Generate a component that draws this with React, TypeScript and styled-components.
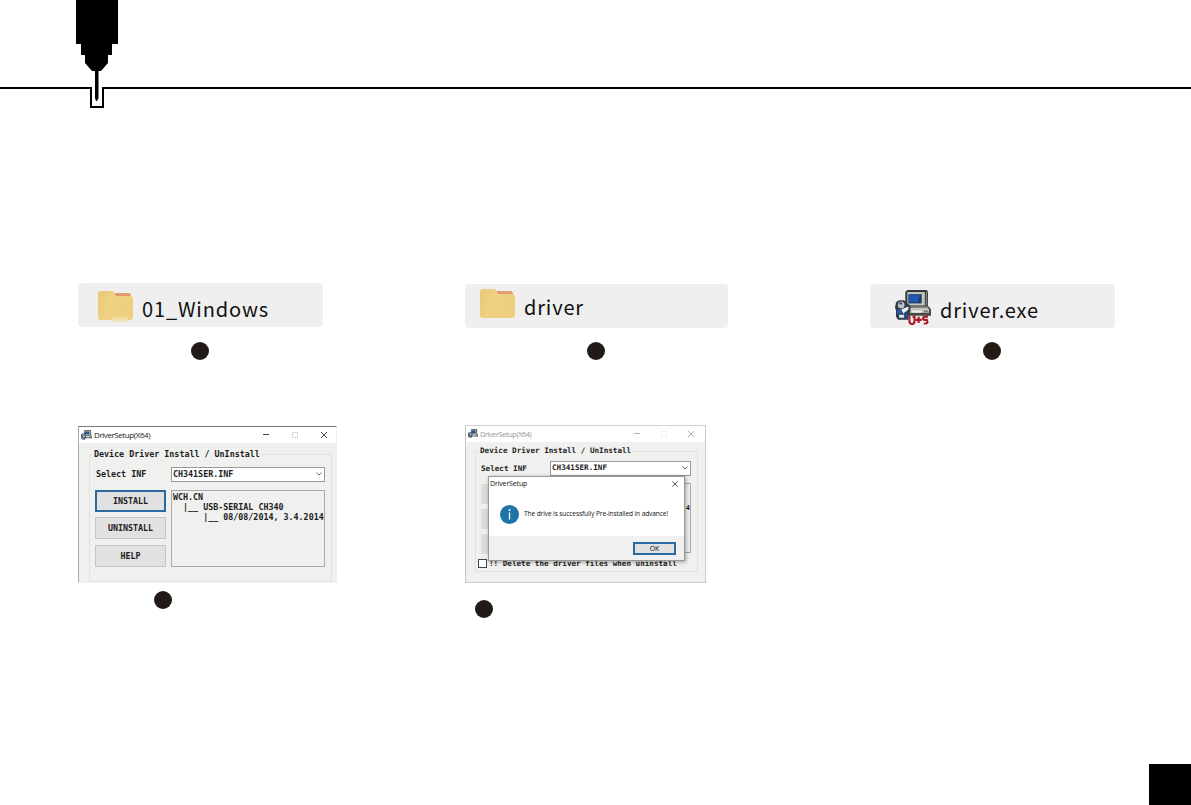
import styled, { createGlobalStyle } from "styled-components";

const GlobalStyle = createGlobalStyle`
  * {
    box-sizing: border-box;
  }
  body {
    margin: 0;
    background: #fff;
    overflow: hidden;
  }
`;

const Page = styled.main`
  display: flex;
  flex-direction: column;
  height: 805px;
  width: 1191px;
  overflow: hidden;
`;

const Header = styled.header`
  height: 115px;
  flex: none;
  svg {
    display: block;
  }
`;

const Row = styled.section<{ $top: number; $height: number }>`
  display: grid;
  grid-template-columns: 387px 405px 1fr;
  align-items: start;
  margin-top: ${(p) => p.$top}px;
  padding-left: 78px;
  height: ${(p) => p.$height}px;
  flex: none;
`;

const Step = styled.div<{ $top?: number }>`
  display: flex;
  flex-direction: column;
  align-items: flex-start;
  padding-top: ${(p) => p.$top ?? 0}px;
`;

const FileCard = styled.div<{ $width: number; $pad: string; $gap: number; $drop: number }>`
  display: flex;
  align-items: flex-start;
  gap: ${(p) => p.$gap}px;
  width: ${(p) => p.$width}px;
  height: 44px;
  padding: ${(p) => p.$pad};
  border-radius: 4px;
  background: #efefef;
  svg {
    flex: none;
  }
  span {
    margin-top: ${(p) => p.$drop}px;
  }
`;

const FileName = styled.span`
  font: 20px/28px "Noto Sans CJK SC", "Noto Sans", sans-serif;
  letter-spacing: 0.85px;
  color: #111;
  white-space: nowrap;
`;

const Dot = styled.i<{ $left: number; $top: number }>`
  width: 18px;
  height: 18px;
  margin: ${(p) => p.$top}px 0 0 ${(p) => p.$left}px;
  border-radius: 50%;
  background: #211a17;
`;

const Window = styled.div<{ $width: number; $height: number; $faded?: boolean }>`
  position: relative;
  width: ${(p) => p.$width}px;
  height: ${(p) => p.$height}px;
  background: #f0f0ef;
  border: 1px solid ${(p) => (p.$faded ? "#c9c9c9" : "#f0f0ef")};
  border-top-color: ${(p) => (p.$faded ? "#d0d0d0" : "#777")};
  border-left-color: ${(p) => (p.$faded ? "#c4c4c4" : "#aaa")};
`;

const TitleBar = styled.div<{ $faded?: boolean }>`
  display: flex;
  align-items: center;
  height: 16px;
  padding: 0 ${(p) => (p.$faded ? 2 : 0)}px 0 2px;
  background: #fff;
  color: ${(p) => (p.$faded ? "#999" : "#222")};
  svg {
    flex: none;
  }
`;

const Title = styled.span<{ $size: number }>`
  flex: 1;
  padding-left: 2px;
  font: ${(p) => p.$size}px/14px "Open Sans", sans-serif;
  letter-spacing: -0.42px;
  white-space: nowrap;
`;

const Group = styled.div<{ $margin: string; $height: number }>`
  height: ${(p) => p.$height}px;
  margin: ${(p) => p.$margin};
  border: 1px solid #e2e2e1;
`;

const Mono = styled.span<{ $size: number }>`
  display: block;
  font: bold ${(p) => p.$size}px/10px "DejaVu Sans Mono", monospace;
  color: #1d1d1d;
  white-space: pre;
`;

const Legend = styled(Mono)`
  width: max-content;
  margin: -6px 0 0 3px;
  padding: 0 2px 0 1px;
  background: #f0f0ef;
`;

const Fields = styled.div<{ $cols: string; $margin: string }>`
  display: grid;
  grid-template-columns: ${(p) => p.$cols};
  grid-template-rows: 15px auto;
  margin: ${(p) => p.$margin};
`;

const Label = styled.div<{ $left: number; $top: number }>`
  padding: ${(p) => p.$top}px 0 0 ${(p) => p.$left}px;
`;

const Combo = styled.div`
  display: flex;
  align-items: center;
  justify-content: space-between;
  padding: 0 2px 1px 1px;
  border: 1px solid #999;
  background: #fff;
`;

const Buttons = styled.div`
  display: flex;
  flex-direction: column;
  gap: 5px;
  padding-top: 8px;
`;

const Button = styled.div<{ $primary?: boolean; $top?: number }>`
  display: flex;
  align-items: center;
  justify-content: center;
  width: 71px;
  height: 22px;
  margin-top: ${(p) => p.$top ?? 0}px;
  background: #e1e1e1;
  border: ${(p) => (p.$primary ? "2px solid #2b6a9f" : "1px solid #c6c6c6")};
`;

const ListBox = styled.div<{ $top: number; $height: number }>`
  height: ${(p) => p.$height}px;
  margin-top: ${(p) => p.$top}px;
  padding: 1px 0 0 1px;
  border: 1px solid #a9a9a9;
  overflow: hidden;
`;

const Stub = styled.div`
  width: 20px;
  height: 20px;
  background: #dcdcdc;
`;

const Edge = styled(Mono)`
  padding-top: 18px;
  text-align: right;
`;

const Check = styled.div`
  display: flex;
  align-items: center;
  gap: 2px;
  margin: 5px 0 0 2px;
  height: 9px;
`;

const Box = styled.i`
  width: 9px;
  height: 9px;
  border: 1px solid #444;
  background: #fff;
`;

const Dialog = styled.div`
  position: absolute;
  left: 22px;
  top: 50px;
  display: flex;
  flex-direction: column;
  width: 197px;
  height: 85px;
  border: 1px solid #999;
  background: #fff;
  box-shadow: 1px 1px 4px rgba(0, 0, 0, 0.35);
`;

const DialogTitle = styled.div`
  display: flex;
  align-items: center;
  justify-content: space-between;
  height: 14px;
  padding: 0 6px 0 1px;
`;

const DialogText = styled.span<{ $size: number; $spacing?: number }>`
  font: ${(p) => p.$size}px/12px "Open Sans", sans-serif;
  letter-spacing: ${(p) => p.$spacing ?? 0}px;
  color: #111;
  white-space: nowrap;
`;

const Message = styled.div`
  display: flex;
  align-items: center;
  gap: 5px;
  flex: 1;
  padding: 1px 0 0 11px;
`;

const DialogFooter = styled.div`
  display: flex;
  justify-content: flex-end;
  height: 24px;
  padding: 6px 8px 0 0;
  background: #f0f0f0;
`;

const OkButton = styled.div`
  display: flex;
  align-items: center;
  justify-content: center;
  width: 43px;
  height: 13px;
  border: 2px solid #2b6a9f;
  background: #e1e1e1;
`;

const PageTab = styled.div`
  width: 42px;
  height: 41px;
  margin: auto 0 0 auto;
  background: #000;
`;

const Folder = ({ variant }: { variant: "soft" | "plain" }) => (
  <svg width="36" height="36" viewBox="0 0 36 36">
    <defs>
      <linearGradient id="fade" x1="0" y1="0" x2="0" y2="1">
        <stop offset="0" stopColor="#edcf7e" />
        <stop offset="0.45" stopColor="#efdc9f" />
        <stop offset="1" stopColor="#efeee6" />
      </linearGradient>
      <linearGradient id="front" x1="0" y1="0" x2="1" y2="0.3">
        <stop offset="0" stopColor="#e9c877" />
        <stop offset="0.4" stopColor="#f0d182" />
        <stop offset="1" stopColor="#edcf7e" />
      </linearGradient>
    </defs>
    <path d="M15 3h15q3 0 3 3v4H15z" fill="#e39a6c" />
    <path d="M0 4q0-3 3-3h11q2 0 3 3l1 2h14q3 0 3 3v18q0 3-3 3H3q-3 0-3-3z" fill="url(#front)" />
    {variant === "soft" && <path d="M14 25h16v8H14z" fill="url(#fade)" />}
  </svg>
);

const DriverIcon = ({ size }: { size: number }) => (
  <svg width={size} height={size} viewBox="0 0 35 35">
    <path d="M12 1h19l1 2v14H10V3z" fill="#343b3c" />
    <path d="M12 3h17v13H12z" fill="#c5c9bf" />
    <path d="M30 3h1v13h-1z" fill="#8b918a" />
    <path d="M13 5h13v9H13z" fill="#24396d" />
    <path d="M14 6h10l-2 7h-8z" fill="#225ab1" />
    <path d="M14 17h19l2 3v6H11v-6z" fill="#454a47" />
    <path d="M15 18h17l1 2v3H14v-3z" fill="#c4c6bd" />
    <path d="M16 21h10v2H16z" fill="#eee" />
    <path d="M28 21h4v1h-4z" fill="#555" />
    <path d="M1 13l3-2h5l3 3 3 2v6l-2 2v6H3l-2-3v-6l-1-3z" fill="#30394a" />
    <circle cx="6" cy="15.5" r="3.3" fill="#bcc4c8" />
    <path d="M4 13h3v2H4z" fill="#4b545c" />
    <path d="M6 20l7-3v3l-5 4z" fill="#eef1f2" />
    <path d="M2 20h4l2 4H2z" fill="#2359a5" />
    <path d="M4 25h5v3H4z" fill="#d9e4ef" />
    <path d="M9 23h3v6H9z" fill="#274c84" />
    {size > 20 && (
      <g fill="none" stroke="#a81722" strokeWidth="2">
        <path d="M14 26v5q0 3 2.5 3t2.5-3v-4h-2" />
        <path d="M20 30h6M23 27v6" />
        <path d="M32 27h-4q-2 3 1 3h2q2 4-3 3.5" />
      </g>
    )}
  </svg>
);

const WindowControls = ({ faded, gap }: { faded?: boolean; gap: number }) => (
  <svg width="76" height="14" viewBox="0 0 76 14" fill="none" stroke={faded ? "#aaa" : "#333"} strokeWidth="0.9">
    <path d={`M${61 - gap * 2} 6.5h6`} />
    <path d={`M${61.5 - gap} 4.5h5v5h-5z`} stroke={faded ? "#eee" : "#d4d4d4"} />
    <path d="M61 4l6 6M67 4l-6 6" />
  </svg>
);

const Chevron = () => (
  <svg width="6" height="4" viewBox="0 0 6 4" fill="none" stroke="#555" strokeWidth="0.9">
    <path d="M0.5 0.5L3 3L5.5 0.5" />
  </svg>
);

const MachineHead = () => (
  <svg width="1191" height="115" viewBox="0 0 1191 115">
    <path d="M0 88H91V107H103V88H1191" fill="none" stroke="#000" strokeWidth="2" />
    <path d="M76 0h42v44h-6v11h-4v8l-7 8H92l-7-8v-8h-4V44h-5z" />
    <path d="M95 70h3.5v28l-1.5 3h-1l-1-3z" />
  </svg>
);

const InstallWindow = () => (
  <Window $width={259} $height={157}>
    <TitleBar>
      <DriverIcon size={11} />
      <Title $size={8}>DriverSetup(X64)</Title>
      <WindowControls gap={29} />
    </TitleBar>
    <Group $margin="11px 4px 0 10px" $height={128}>
      <Legend $size={8.36}>Device Driver Install / UnInstall</Legend>
      <Fields $cols="76px 154px" $margin="8px 0 0 5px">
        <Label $left={1} $top={2}>
          <Mono $size={8.36}>Select INF</Mono>
        </Label>
        <Combo>
          <Mono $size={8.36}>CH341SER.INF</Mono>
          <Chevron />
        </Combo>
        <Buttons>
          <Button $primary>
            <Mono $size={8.36}>INSTALL</Mono>
          </Button>
          <Button>
            <Mono $size={8.36}>UNINSTALL</Mono>
          </Button>
          <Button $top={1}>
            <Mono $size={8.36}>HELP</Mono>
          </Button>
        </Buttons>
        <ListBox $top={8} $height={77}>
          <Mono $size={8.36}>WCH.CN</Mono>
          <Mono $size={8.36}>{"  |__ USB-SERIAL CH340"}</Mono>
          <Mono $size={8.36}>{"      |__ 08/08/2014, 3.4.2014"}</Mono>
        </ListBox>
      </Fields>
    </Group>
  </Window>
);

const SuccessWindow = () => (
  <Window $width={241} $height={158} $faded>
    <TitleBar $faded>
      <DriverIcon size={10} />
      <Title $size={7.4}>DriverSetup(X64)</Title>
      <WindowControls faded gap={27} />
    </TitleBar>
    <Group $margin="9px 7px 0 9px" $height={121}>
      <Legend $size={7.61}>Device Driver Install / UnInstall</Legend>
      <Fields $cols="69px 141px" $margin="5px 0 0 5px">
        <Label $left={0} $top={3}>
          <Mono $size={7.61}>Select INF</Mono>
        </Label>
        <Combo>
          <Mono $size={7.61}>CH341SER.INF</Mono>
          <Chevron />
        </Combo>
        <Buttons>
          <Stub />
          <Stub />
          <Stub />
        </Buttons>
        <ListBox $top={7} $height={70}>
          <Edge $size={7}>4</Edge>
        </ListBox>
      </Fields>
      <Check>
        <Box />
        <Mono $size={7.61}>!! Delete the driver files when uninstall</Mono>
      </Check>
    </Group>
    <Dialog>
      <DialogTitle>
        <DialogText $size={7} $spacing={-0.15}>DriverSetup</DialogText>
        <svg width="6" height="6" viewBox="0 0 6 6" stroke="#333" strokeWidth="0.8">
          <path d="M0.3 0.3l5.4 5.4M5.7 0.3L0.3 5.7" />
        </svg>
      </DialogTitle>
      <Message>
        <svg width="19" height="19" viewBox="0 0 19 19">
          <circle cx="9.5" cy="9.5" r="9.5" fill="#1e73a8" />
          <circle cx="9.5" cy="5" r="1" fill="#fff" />
          <path d="M9.5 7.5v7" stroke="#fff" strokeWidth="1.3" />
        </svg>
        <DialogText $size={6.6} $spacing={-0.11}>The drive is successfully Pre-installed in advance!</DialogText>
      </Message>
      <DialogFooter>
        <OkButton>
          <DialogText $size={7}>OK</DialogText>
        </OkButton>
      </DialogFooter>
    </Dialog>
  </Window>
);

const App = () => {
  return (
    <Page>
      <GlobalStyle />
      <Header>
        <MachineHead />
      </Header>
      <Row $top={168} $height={142}>
        <Step>
          <FileCard $width={245} $pad="7px 0 0 20px" $gap={8} $drop={5}>
            <Folder variant="soft" />
            <FileName>01_Windows</FileName>
          </FileCard>
          <Dot $left={113} $top={15} />
        </Step>
        <Step $top={1}>
          <FileCard $width={263} $pad="4px 0 0 15px" $gap={8} $drop={5}>
            <Folder variant="plain" />
            <FileName>driver</FileName>
          </FileCard>
          <Dot $left={122} $top={14} />
        </Step>
        <Step $top={1}>
          <FileCard $width={245} $pad="5px 0 0 25px" $gap={9} $drop={7}>
            <DriverIcon size={36} />
            <FileName>driver.exe</FileName>
          </FileCard>
          <Dot $left={113} $top={14} />
        </Step>
      </Row>
      <Row $top={0} $height={194}>
        <Step $top={1}>
          <InstallWindow />
          <Dot $left={76} $top={8} />
        </Step>
        <Step>
          <SuccessWindow />
          <Dot $left={10} $top={17} />
        </Step>
      </Row>
      <PageTab />
    </Page>
  );
};

export default App;
